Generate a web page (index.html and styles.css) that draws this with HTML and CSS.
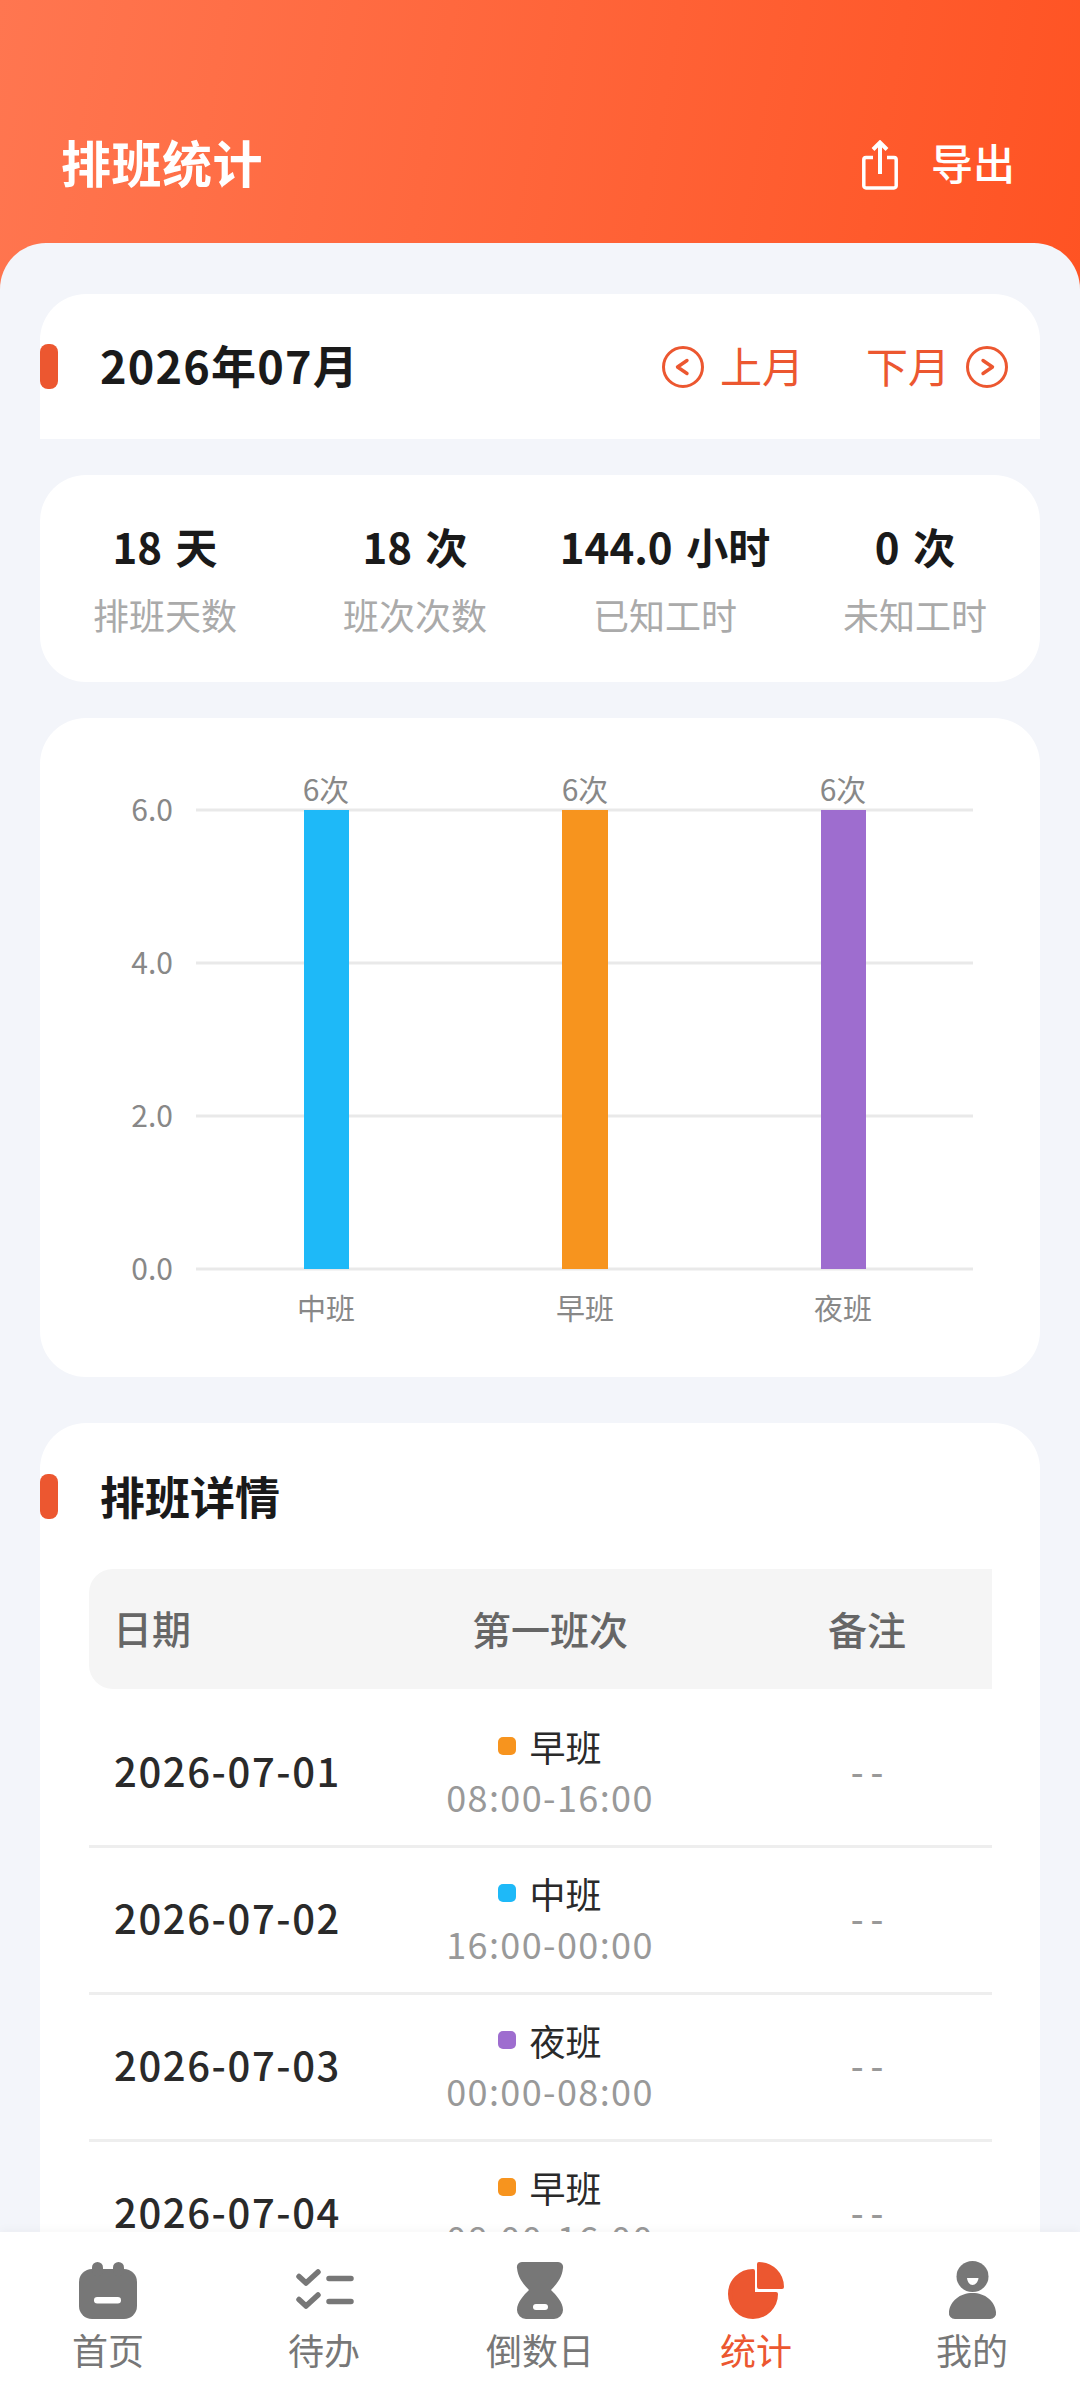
FILE: index.html
```html
<!DOCTYPE html>
<html lang="zh-CN">
  <head>
    <meta charset="utf-8" />
    <title>排班统计</title>
    <link rel="stylesheet" href="styles.css">
  </head>
  <body>
    <header class="top-bar">
      <h1 class="page-title">排班统计</h1>
      <button class="export-btn" type="button">
        <svg class="export-icon" viewBox="0 0 36 50" fill="none" stroke="#fff" stroke-width="3.5">
          <path d="M11 17.5H4a2.2 2.2 0 0 0-2.2 2.2v26a2.2 2.2 0 0 0 2.2 2.2h28a2.2 2.2 0 0 0 2.2-2.2v-26a2.2 2.2 0 0 0-2.2-2.2h-7" />
          <path d="M18 34V3M11 9.5 18 2.5l7 7" stroke-width="4" />
        </svg>
        <span class="export-label">导出</span>
      </button>
    </header>

    <main class="panel">
      <section class="card month-card">
        <i class="accent"></i>
        <h2 class="section-title month-title">2026年07月</h2>
        <div class="month-nav">
          <svg class="month-icon" viewBox="0 0 42 42" fill="none" stroke="#ec5730" stroke-width="3">
            <circle cx="21" cy="21" r="19.5" />
            <path d="M25 14.5 15.5 21l9.5 6.500" stroke-width="3.400" stroke-linecap="round" stroke-linejoin="round" />
          </svg>
          <span class="month-link">上月</span>
          <span class="month-link month-link-next">下月</span>
          <svg class="month-icon" viewBox="0 0 42 42" fill="none" stroke="#ec5730" stroke-width="3">
            <circle cx="21" cy="21" r="19.5" />
            <path d="M17 14.5 26.500 21 17 27.500" stroke-width="3.400" stroke-linecap="round" stroke-linejoin="round" />
          </svg>
        </div>
      </section>

      <section class="card stats-card">
        <div class="stat">
          <strong>18 天</strong>
          <span>排班天数</span>
        </div>
        <div class="stat">
          <strong>18 次</strong>
          <span>班次次数</span>
        </div>
        <div class="stat">
          <strong>144.0 小时</strong>
          <span>已知工时</span>
        </div>
        <div class="stat">
          <strong>0 次</strong>
          <span>未知工时</span>
        </div>
      </section>

      <section class="card chart-card">
        <svg class="chart" viewBox="0 0 1000 659">
          <g class="grid-lines">
            <rect x="156" y="90.500" width="777" height="3" />
            <rect x="156" y="243.500" width="777" height="3" />
            <rect x="156" y="396.500" width="777" height="3" />
            <rect x="156" y="549.500" width="777" height="3" />
          </g>
          <text class="axis-y" x="133" y="103">6.0</text>
          <text class="axis-y" x="133" y="256">4.0</text>
          <text class="axis-y" x="133" y="409">2.0</text>
          <text class="axis-y" x="133" y="562">0.0</text>

          <rect class="bar-mid" x="264" y="92" width="45" height="459" />
          <rect class="bar-early" x="522" y="92" width="46" height="459" />
          <rect class="bar-night" x="781" y="92" width="45" height="459" />

          <text class="bar-value" x="286" y="83">6次</text>
          <text class="bar-value" x="545" y="83">6次</text>
          <text class="bar-value" x="803" y="83">6次</text>

          <text class="axis-x" x="286" y="602">中班</text>
          <text class="axis-x" x="545" y="602">早班</text>
          <text class="axis-x" x="803" y="602">夜班</text>
        </svg>
      </section>

      <section class="card detail-card">
        <div class="detail-head">
          <i class="accent"></i>
          <h2 class="section-title detail-title">排班详情</h2>
        </div>
        <div class="table">
          <div class="table-head">
            <span class="col-date">日期</span>
            <span>第一班次</span>
            <span>备注</span>
          </div>
          <div class="table-row">
            <span class="col-date">2026-07-01</span>
            <div class="shift">
              <span class="shift-name"><i class="dot dot-early"></i>早班</span>
              <span class="shift-time">08:00-16:00</span>
            </div>
            <span class="remark">--</span>
          </div>
          <div class="table-row">
            <span class="col-date">2026-07-02</span>
            <div class="shift">
              <span class="shift-name"><i class="dot dot-mid"></i>中班</span>
              <span class="shift-time">16:00-00:00</span>
            </div>
            <span class="remark">--</span>
          </div>
          <div class="table-row">
            <span class="col-date">2026-07-03</span>
            <div class="shift">
              <span class="shift-name"><i class="dot dot-night"></i>夜班</span>
              <span class="shift-time">00:00-08:00</span>
            </div>
            <span class="remark">--</span>
          </div>
          <div class="table-row">
            <span class="col-date">2026-07-04</span>
            <div class="shift">
              <span class="shift-name"><i class="dot dot-early"></i>早班</span>
              <span class="shift-time">08:00-16:00</span>
            </div>
            <span class="remark">--</span>
          </div>
        </div>
      </section>
    </main>

    <nav class="tab-bar">
      <a class="tab">
        <svg viewBox="0 0 60 60" fill="#777">
          <rect x="1" y="9" width="58" height="50" rx="13" />
          <rect x="14" y="2" width="11" height="14" rx="5.500" />
          <rect x="35" y="2" width="11" height="14" rx="5.500" />
          <rect x="16" y="37" width="27" height="6.500" rx="3.200" fill="#fff" />
        </svg>
        <span>首页</span>
      </a>
      <a class="tab">
        <svg viewBox="0 0 60 60" fill="none" stroke="#777" stroke-width="5.500" stroke-linecap="round" stroke-linejoin="round">
          <path d="M5 16.500 12 23 24 12M5 39.500 12 46 24 35M35 18.500H57M35 41.500H57" />
        </svg>
        <span>待办</span>
      </a>
      <a class="tab">
        <svg viewBox="0 0 60 60" fill="#777">
          <path d="M12 2H48a5 5 0 0 1 5 6C52 18 46 25 41 30 46 35 53 42 53 50a9 9 0 0 1-9 9H16a9 9 0 0 1-9-9C7 42 14 35 19 30 14 25 8 18 7 8a5 5 0 0 1 5-6Z" />
          <rect x="23" y="44" width="15" height="6" rx="3" fill="#fff" />
        </svg>
        <span>倒数日</span>
      </a>
      <a class="tab tab-active">
        <svg viewBox="0 0 60 60" fill="#ec5730" stroke="#ec5730" stroke-width="4" stroke-linejoin="round">
          <path d="M27 11V34H50A23 23 0 1 1 27 11Z" />
          <path d="M33 4V27H56A23 23 0 0 0 33 4Z" />
        </svg>
        <span>统计</span>
      </a>
      <a class="tab">
        <svg viewBox="0 0 60 60" fill="#777">
          <ellipse cx="30.500" cy="16.500" rx="16" ry="15.500" />
          <path d="M25 18H36.500C36 22 33.500 25 30.500 25S25.500 22 25 18Z" fill="#fff" />
          <path d="M13 59a6 6 0 0 1-6-7C8 41 18 33 30.500 33S53 41 54 52a6 6 0 0 1-6 7Z" />
        </svg>
        <span>我的</span>
      </a>
    </nav>
  </body>
</html>
```

FILE: styles.css
```css
* {
  box-sizing: border-box;
}

html,
body {
  margin: 0;
  height: 2400px;
  overflow: hidden;
}

body {
  display: flex;
  flex-direction: column;
  background-color: #f3f5fa;
  font-family: "Noto Sans CJK SC", sans-serif;
  color: #1a1a1a;
}

h1,
h2 {
  margin: 0;
}

i {
  display: block;
}

.top-bar {
  flex: none;
  display: flex;
  align-items: center;
  justify-content: space-between;
  height: 300px;
  padding: 30px 65px 0 61px;
  background: linear-gradient(100deg, #ff7650, #ff5323);
  color: #fff;
}

.page-title {
  padding-bottom: 8px;
  font-size: 50px;
  font-weight: 700;
  letter-spacing: 0.5px;
}

.export-btn {
  display: flex;
  align-items: center;
  gap: 33px;
  padding: 0;
  border: 0;
  background: none;
  color: inherit;
  font: inherit;
  font-size: 42px;
  font-weight: 500;
}

.export-label {
  padding-bottom: 8px;
}

.export-icon {
  width: 36px;
  height: 50px;
}

.panel {
  flex: 1;
  min-height: 0;
  overflow: hidden;
  margin-top: -57px;
  padding: 51px 40px 0;
  border-radius: 46px 46px 0 0;
  background-color: #f3f5fa;
}

.card {
  background-color: #fff;
  border-radius: 46px;
}

.accent {
  flex: none;
  width: 18px;
  height: 45px;
  border-radius: 8px;
  background-color: #ec5730;
}

.section-title {
  margin-left: 42px;
  font-size: 45px;
  font-weight: 700;
}

.month-title {
  padding-bottom: 4px;
  letter-spacing: 1.2px;
}

.detail-title {
  padding-bottom: 3px;
}

.month-card {
  display: flex;
  align-items: center;
  height: 145px;
  padding-right: 32px;
  border-radius: 46px 46px 0 0;
}

.month-nav {
  display: flex;
  align-items: center;
  gap: 16px;
  margin-left: auto;
  color: #ec5730;
  font-size: 42px;
}

.month-link {
  padding-bottom: 4px;
}

.month-icon {
  width: 42px;
  height: 42px;
}

.month-link-next {
  margin-left: 46px;
}

.stats-card {
  display: grid;
  grid-template-columns: repeat(4, 1fr);
  align-content: center;
  height: 207px;
  margin-top: 36px;
}

.stat {
  display: flex;
  flex-direction: column;
  align-items: center;
  gap: 16px;
}

.stat strong {
  font-size: 42px;
  font-weight: 700;
  line-height: 54px;
  word-spacing: 4px;
}

.stat span {
  color: #aaa;
  font-size: 36px;
  line-height: 50px;
}

.chart-card {
  height: 659px;
  margin-top: 36px;
}

.chart {
  display: block;
  width: 1000px;
  height: 659px;
}

.grid-lines {
  fill: #e9e9e9;
}

.bar-mid {
  fill: #1eb9f8;
}

.bar-early {
  fill: #f7941e;
}

.bar-night {
  fill: #9e6dcf;
}

.axis-y,
.bar-value,
.axis-x {
  fill: #888;
}

.axis-y {
  font-size: 30px;
  text-anchor: end;
}

.bar-value {
  font-size: 30px;
  text-anchor: middle;
}

.axis-x {
  font-size: 29px;
  text-anchor: middle;
}

.detail-card {
  margin-top: 46px;
  padding: 51px 0 60px;
}

.detail-head {
  display: flex;
  align-items: center;
  height: 45px;
}

.table {
  margin: 50px 48px 0 49px;
}

.table-head,
.table-row {
  display: grid;
  grid-template-columns: 269px 384px 250px;
  align-items: center;
  justify-items: center;
}

.table-head {
  height: 120px;
  margin-bottom: 12px;
  padding-bottom: 2px;
  border-radius: 24px 0 0 24px;
  background-color: #f5f5f5;
  color: #666;
  font-size: 39px;
  font-weight: 500;
}

.table-row {
  height: 147px;
  padding-bottom: 4px;
  border-bottom: 3px solid #eee;
  color: #2a2a2a;
  font-size: 40px;
}

.col-date {
  justify-self: start;
  padding-bottom: 2px;
  padding-left: 25px;
  font-weight: 500;
  letter-spacing: 1.6px;
}

.table-head .col-date {
  padding-left: 24px;
  letter-spacing: 0;
}

.shift {
  display: flex;
  flex-direction: column;
  align-items: center;
  gap: 2px;
}

.shift-name {
  display: flex;
  align-items: center;
  gap: 13px;
  font-size: 36px;
  line-height: 48px;
}

.shift-time {
  color: #999;
  font-size: 36px;
  line-height: 48px;
  letter-spacing: 1.4px;
}

.dot {
  width: 18px;
  height: 18px;
  border-radius: 5px;
}

.dot-early {
  background-color: #f7941e;
}

.dot-mid {
  background-color: #1eb9f8;
}

.dot-night {
  background-color: #9e6dcf;
}

.remark {
  padding-bottom: 2px;
  padding-left: 7px;
  color: #999;
  font-size: 36px;
  font-weight: 500;
  letter-spacing: 7px;
}

.tab-bar {
  flex: none;
  display: grid;
  grid-template-columns: repeat(5, 1fr);
  height: 168px;
  padding-top: 28px;
  background-color: #fff;
  box-shadow: 0 -3px 8px rgba(0, 0, 0, 0.03);
  position: relative;
}

.tab {
  display: flex;
  flex-direction: column;
  align-items: center;
  color: #777;
  font-size: 36px;
  line-height: 46px;
  gap: 6px;
}

.tab svg {
  width: 60px;
  height: 60px;
}

.tab-active {
  color: #ec5730;
}
```
